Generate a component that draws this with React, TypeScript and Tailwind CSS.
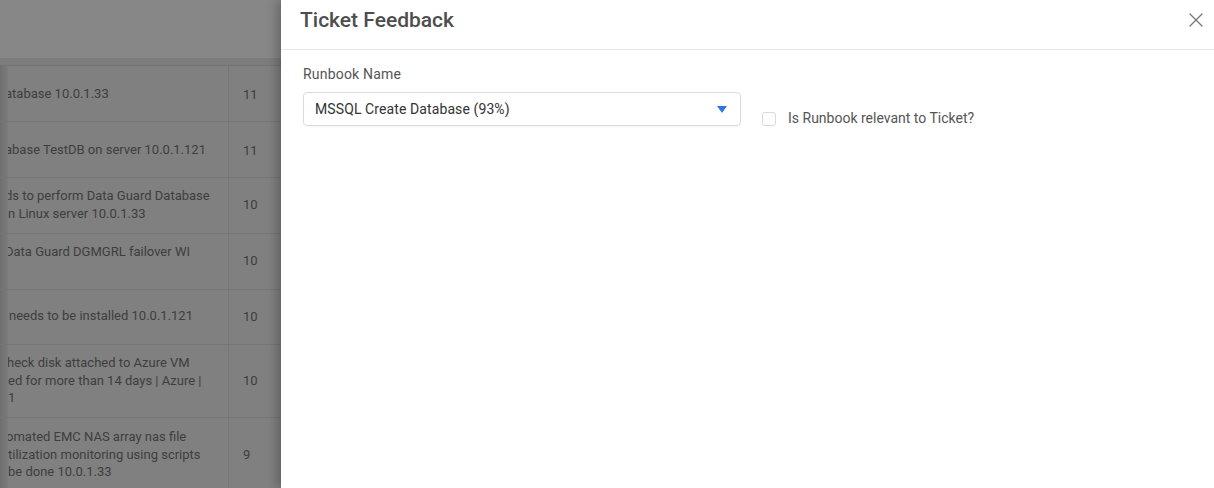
import { X } from "lucide-react";

type Row = { lines: { text: string; shift: number }[]; count: string; h: number; pt: number; numPt: number };

const rows: Row[] = [
  { lines: [{ text: "atabase 10.0.1.33", shift: -3 }], count: "11", h: 56, pt: 19, numPt: 19 },
  { lines: [{ text: "abase TestDB on server 10.0.1.121", shift: -3 }], count: "11", h: 56, pt: 19, numPt: 19 },
  {
    lines: [
      { text: "ds to perform Data Guard Database", shift: -3 },
      { text: "n Linux server 10.0.1.33", shift: 0 },
    ],
    count: "10",
    h: 56,
    pt: 9,
    numPt: 17,
  },
  { lines: [{ text: "Data Guard DGMGRL failover WI", shift: -3 }], count: "10", h: 56, pt: 9, numPt: 17 },
  { lines: [{ text: "needs to be installed 10.0.1.121", shift: 1 }], count: "10", h: 55, pt: 17, numPt: 17 },
  {
    lines: [
      { text: "heck disk attached to Azure VM", shift: -1 },
      { text: "ed for more than 14 days | Azure |", shift: 0 },
      { text: "1", shift: 0 },
    ],
    count: "10",
    h: 73,
    pt: 9,
    numPt: 26,
  },
  {
    lines: [
      { text: "omated EMC NAS array nas file", shift: -2 },
      { text: "tilization monitoring using scripts", shift: 0 },
      { text: "be done 10.0.1.33", shift: 0 },
    ],
    count: "9",
    h: 73,
    pt: 10,
    numPt: 27,
  },
];

function BackgroundTable() {
  return (
    <div className="w-[281px] h-full bg-[#808080] text-[13px] text-[#3e3e3e] flex flex-col">
      <div className="h-[58px] bg-[#878787] shrink-0" />
      <div className="h-[8px] bg-[#7c7c7c] border-b border-[#737373] shrink-0" />
      {rows.map((r, i) => (
        <div key={i} className="flex shrink-0 border-b border-[#767676]" style={{ height: r.h }}>
          <div className="w-[8px] shrink-0 bg-gradient-to-r from-[#6f6f6f] to-[#7c7c7c]" />
          <div className="w-[220px] overflow-hidden leading-[17.5px]" style={{ paddingTop: r.pt }}>
            {r.lines.map((l, j) => (
              <div key={j} className="whitespace-nowrap" style={{ marginLeft: l.shift }}>
                {l.text}
              </div>
            ))}
          </div>
          <div className="flex-1 border-l border-[#767676] pl-[14px]" style={{ paddingTop: r.numPt }}>
            {r.count}
          </div>
        </div>
      ))}
    </div>
  );
}

function Drawer() {
  return (
    <div className="flex-1 h-full bg-white shadow-[-4px_0_10px_rgba(0,0,0,0.25)] flex flex-col">
      <div className="h-[50px] border-b border-[#e6e6e6] flex items-center justify-between pl-[19px] pr-[6px] shrink-0">
        <h2 className="text-[21px] font-medium text-[#4d4d4d] -mt-[8px]">Ticket Feedback</h2>
        <X size={24} strokeWidth={1.3} className="text-[#777] -mt-[10px]" />
      </div>
      <div className="pl-[22px] pt-[14px]">
        <div className="text-[14px] text-[#555] tracking-[0.2px]">Runbook Name</div>
        <div className="flex items-start mt-[7px]">
          <div className="w-[438px] h-[34px] border border-[#dcdcdc] rounded-[4px] flex items-center justify-between pl-[11px] pr-[13px] shadow-[0_1px_2px_rgba(0,0,0,0.04)]">
            <span className="text-[14px] text-[#333] tracking-[0.1px]">MSSQL Create Database (93%)</span>
            <svg width="10" height="7" viewBox="0 0 10 7">
              <path d="M0 0 L10 0 L5 7 Z" fill="#2f77e8" />
            </svg>
          </div>
          <label className="flex items-center ml-[21px] mt-[16px]">
            <span className="w-[14px] h-[14px] border border-[#dadada] rounded-[3px] bg-white" />
            <span className="ml-[12px] text-[14px] text-[#555]">Is Runbook relevant to Ticket?</span>
          </label>
        </div>
      </div>
    </div>
  );
}

export default function App() {
  return (
    <div className="w-[1214px] h-[488px] overflow-hidden flex font-['Roboto',sans-serif]">
      <BackgroundTable />
      <Drawer />
    </div>
  );
}
